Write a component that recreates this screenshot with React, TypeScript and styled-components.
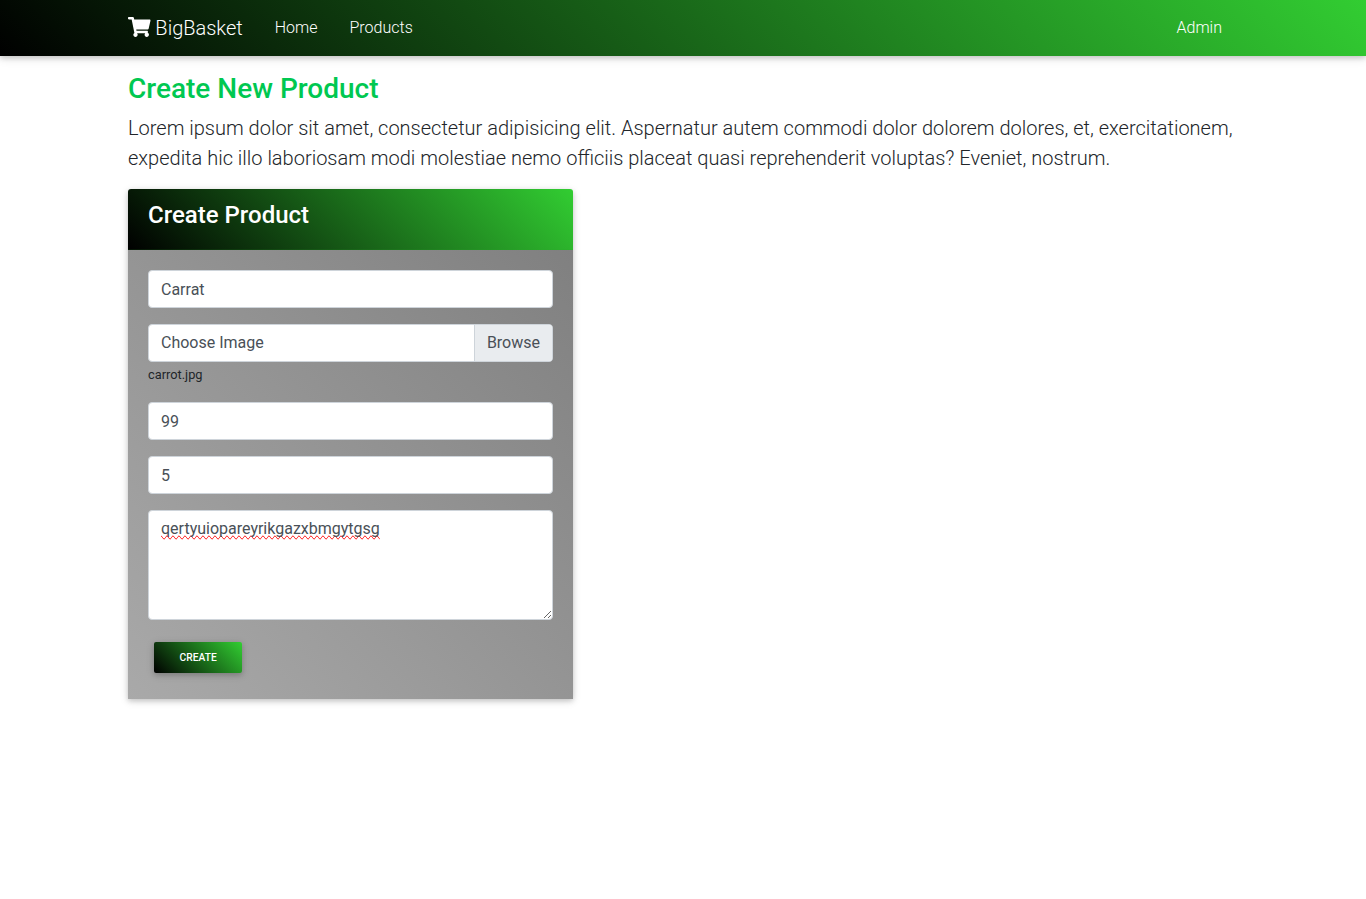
import React from 'react';
import styled, { createGlobalStyle } from 'styled-components';
import { FaShoppingCart } from 'react-icons/fa';

const shadow = '0 2px 5px 0 rgba(0, 0, 0, 0.16), 0 2px 10px 0 rgba(0, 0, 0, 0.12)';
const greenGradient = 'linear-gradient(45deg, black, limegreen)';

const GlobalStyle = createGlobalStyle`
  *, *::before, *::after { box-sizing: border-box; }
  body {
    margin: 0;
    min-height: 100vh;
    background: #fff;
    color: #212529;
    font-family: Roboto, sans-serif;
    font-size: 16px;
    font-weight: 300;
    line-height: 1.5;
  }
`;

const Navbar = styled.nav`
  display: flex;
  height: 56px;
  padding: 8px 16px;
  background: ${greenGradient};
  box-shadow: ${shadow};
`;

const Container = styled.div`
  width: 100%;
  max-width: 1140px;
  margin: 0 auto;
  padding: 0 15px;
`;

const NavContainer = styled(Container)`
  display: flex;
  align-items: center;
  justify-content: space-between;
`;

const NavGroup = styled.div`
  display: flex;
  align-items: center;
`;

const Brand = styled.a`
  margin-right: 16px;
  color: #fff;
  font-size: 20px;
  line-height: 30px;
  white-space: pre;
`;

const CartIcon = styled(FaShoppingCart)`
  width: 22.5px;
  height: 20px;
  vertical-align: -2px;
`;

const NavLink = styled.a`
  padding: 8px 16px;
  color: #fff;
`;

const Main = styled(Container).attrs({ as: 'main' })`
  padding-top: 16px;
  padding-bottom: 16px;
`;

const PageTitle = styled.h3`
  margin: 0 0 7px;
  color: #00c851;
  font-size: 28px;
  font-weight: 500;
  line-height: 1.2;
`;

const Lead = styled.p`
  margin: 0 0 16px;
  font-size: 20px;
  font-weight: 300;
`;

const Card = styled.section`
  width: 445px;
  border-radius: 4px 4px 0 0;
  box-shadow: ${shadow};
`;

const CardHeader = styled.header`
  padding: 12px 20px;
  border-bottom: 1px solid rgba(0, 0, 0, 0.125);
  border-radius: 3px 3px 0 0;
  background: ${greenGradient};
  color: #fff;
`;

const CardTitle = styled.h4`
  margin: 0 0 8px;
  font-size: 24px;
  font-weight: 500;
  line-height: 1.2;
`;

const CardBody = styled.form`
  padding: 20px;
  background: linear-gradient(45deg, darkgray, gray);
`;

const FormGroup = styled.div`
  margin-bottom: 16px;
`;

const Input = styled.input`
  display: block;
  width: 100%;
  height: 38px;
  padding: 6px 12px;
  border: 1px solid #ced4da;
  border-radius: 4px;
  background: #fff;
  color: #495057;
  font: 400 16px/1.5 Roboto, sans-serif;
  outline: none;
`;

const TextArea = styled(Input).attrs({ as: 'textarea' })`
  height: auto;
  resize: vertical;
  overflow: auto;
  text-decoration-line: spelling-error;
`;

const FilePicker = styled.div`
  display: flex;
  justify-content: space-between;
  height: 38px;
  border: 1px solid #ced4da;
  border-radius: 4px;
  background: #fff;
  color: #495057;
  font-weight: 400;
  overflow: hidden;
`;

const FileLabel = styled.label`
  padding: 6px 12px;
`;

const BrowseButton = styled.span`
  padding: 6px 12px;
  border-left: 1px solid #ced4da;
  background: #e9ecef;
`;

const FileName = styled.div`
  height: 24px;
  padding-top: 1px;
  font-size: 12.8px;
  font-weight: 400;
  line-height: 24px;
`;

const Actions = styled.div`
  display: flex;
  padding: 6px;
`;

const SubmitButton = styled.button`
  padding: 8px 25.6px;
  border: 0;
  border-radius: 2px;
  background: ${greenGradient};
  box-shadow: ${shadow};
  color: #fff;
  font: 500 10.24px/15px Roboto, sans-serif;
  text-transform: uppercase;
`;

export default function App() {
  return (
    <>
      <GlobalStyle />
      <Navbar>
        <NavContainer>
          <NavGroup>
            <Brand><CartIcon /> BigBasket</Brand>
            <NavLink>Home</NavLink>
            <NavLink>Products</NavLink>
          </NavGroup>
          <NavLink>Admin</NavLink>
        </NavContainer>
      </Navbar>
      <Main>
        <PageTitle>Create New Product</PageTitle>
        <Lead>
          Lorem ipsum dolor sit amet, consectetur adipisicing elit. Aspernatur autem commodi dolor
          dolorem dolores, et, exercitationem, expedita hic illo laboriosam modi molestiae nemo
          officiis placeat quasi reprehenderit voluptas? Eveniet, nostrum.
        </Lead>
        <Card>
          <CardHeader>
            <CardTitle>Create Product</CardTitle>
          </CardHeader>
          <CardBody>
            <FormGroup><Input defaultValue="Carrat" /></FormGroup>
            <FormGroup>
              <FilePicker>
                <FileLabel>Choose Image</FileLabel>
                <BrowseButton>Browse</BrowseButton>
              </FilePicker>
              <FileName>carrot.jpg</FileName>
            </FormGroup>
            <FormGroup><Input defaultValue="99" /></FormGroup>
            <FormGroup><Input defaultValue="5" /></FormGroup>
            <FormGroup><TextArea {...{ rows: 4 }} defaultValue="qertyuiopareyrikgazxbmgytgsg" /></FormGroup>
            <Actions>
              <SubmitButton type="button">Create</SubmitButton>
            </Actions>
          </CardBody>
        </Card>
      </Main>
    </>
  );
}
